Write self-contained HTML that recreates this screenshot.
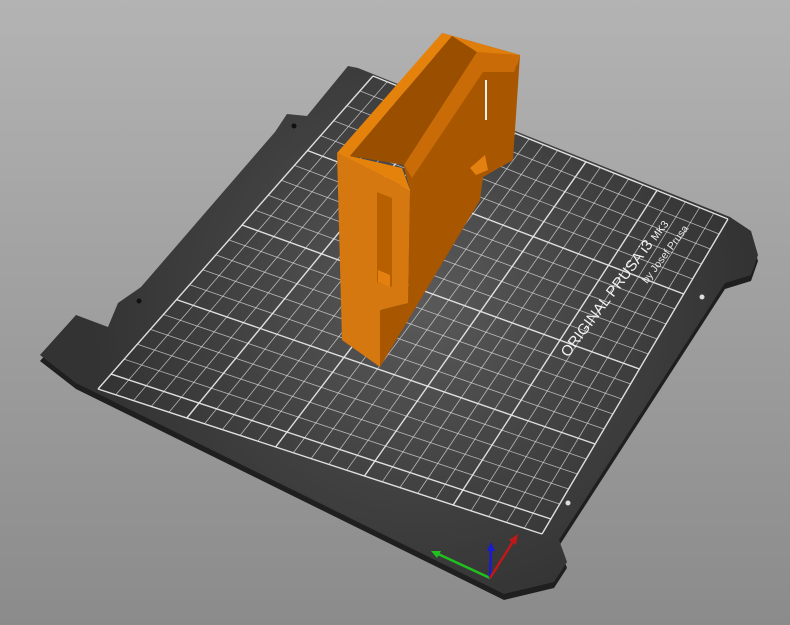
<!DOCTYPE html>
<html><head><meta charset="utf-8"><style>
html,body{margin:0;padding:0;width:790px;height:625px;overflow:hidden;background:linear-gradient(#b3b3b3,#8b8b8b);}
svg{display:block}
</style></head><body>
<svg id="s" width="790" height="625" viewBox="0 0 790 625" xmlns="http://www.w3.org/2000/svg">
<defs>
<radialGradient id="bg" cx="420" cy="300" r="330" gradientUnits="userSpaceOnUse">
<stop offset="0" stop-color="#5a5a5a"/><stop offset="0.6" stop-color="#404040"/><stop offset="1" stop-color="#333"/>
</radialGradient>
</defs>
<polygon fill="#1f1f1f" points="348,72 358,74 730,223 751,237 758,261 751,281 725,289 559,546 567,568 554,588 504,600 76,389 40,361 76,321 108,333 118,309 141,293 275,138 287,120 307,122"/>
<polygon fill="url(#bg)" points="348,66 358,68 730,217 751,231 758,255 751,275 725,283 559,540 567,562 554,582 504,594 76,383 40,355 76,315 108,327 118,303 141,287 275,132 287,114 307,116"/>
<g fill="#111"><circle cx="294" cy="126" r="2.5"/><circle cx="139" cy="301" r="2.5"/></g>
<g fill="#ddd"><circle cx="702" cy="297" r="2.5"/><circle cx="568" cy="503" r="2.5"/></g>
<g id="grid" stroke="#e8e8e8" fill="none"></g>
<text x="0" y="0" fill="#f2f2f2" font-family="Liberation Sans, sans-serif" font-size="15" transform="translate(568,358) rotate(-53)">ORIGINAL PRUSA i3 <tspan font-size="10.5">MK3</tspan></text>
<text x="0" y="0" fill="#e8e8e8" font-family="Liberation Sans, sans-serif" font-size="10.5" transform="translate(647,284) rotate(-53)">by Josef Prusa</text>
<line x1="490" y1="578" x2="436" y2="553" stroke="#1fc01f" stroke-width="2.5"/>
<polygon fill="#1fc01f" points="431,551 441,551 437,558"/>
<line x1="490" y1="578" x2="491" y2="548" stroke="#1a1ad0" stroke-width="2.5"/>
<polygon fill="#1a1ad0" points="491,542 487,551 495,551"/>
<line x1="490" y1="578" x2="514" y2="540" stroke="#c01818" stroke-width="2.5"/>
<polygon fill="#c01818" points="518,534 509,540 516,545"/>
<polygon fill="#a95600" points="442,33 520,55 513,160 483,177 480,200 380,367 380,310 408,303 410,190 402,160"/>
<polygon fill="#d67810" points="337,153 410,190 408,303 380,310 380,367 342,340"/>
<polygon fill="#e5820c" points="337,153 442,33 452,36 350,156 402,168 410,190"/>
<polygon fill="#e07e0c" points="442,33 520,55 517,65 480,60 452,36"/>
<polygon fill="#9a4e00" points="452,36 477,52 404,165 350,156"/>
<polygon fill="#c96c08" points="477,52 520,55 514,72 483,72 412,178 404,165"/>
<polygon fill="#b86000" points="377,192 392,198 392,287 377,282"/>
<polygon fill="#e38010" points="378,270 390,275 390,287 378,282"/>
<line x1="486" y1="80" x2="486" y2="120" stroke="#f0f0f0" stroke-width="2"/>
<polygon fill="#e38010" points="470,168 485,155 488,170 476,175"/>
</svg>
<script>
(function(){
var A=[373,76],B=[728,219],C=[542,534],D=[98,389];
function P(u,v){
 var fx=D[0]+(C[0]-D[0])*u, fy=D[1]+(C[1]-D[1])*u;
 var bx=A[0]+(B[0]-A[0])*u, by=A[1]+(B[1]-A[1])*u;
 return [fx+(bx-fx)*v, fy+(by-fy)*v];}
var g=document.getElementById('grid'),h='';
function ln(p,q,w){h+='<line x1="'+p[0].toFixed(1)+'" y1="'+p[1].toFixed(1)+'" x2="'+q[0].toFixed(1)+'" y2="'+q[1].toFixed(1)+'" stroke-width="'+w+'" stroke-opacity="'+(w>1?0.95:0.7)+'"/>';}
for(var i=0;i<=25;i++){var u=i/25;ln(P(u,0),P(u,1),(i%5==0)?1.4:0.8);}
for(var j=0;j<=21;j++){var v=j/21;ln(P(0,v),P(1,v),(j%5==1||j==0||j==21)?1.4:0.8);}
g.innerHTML=h;
})();
</script>
</body></html>
